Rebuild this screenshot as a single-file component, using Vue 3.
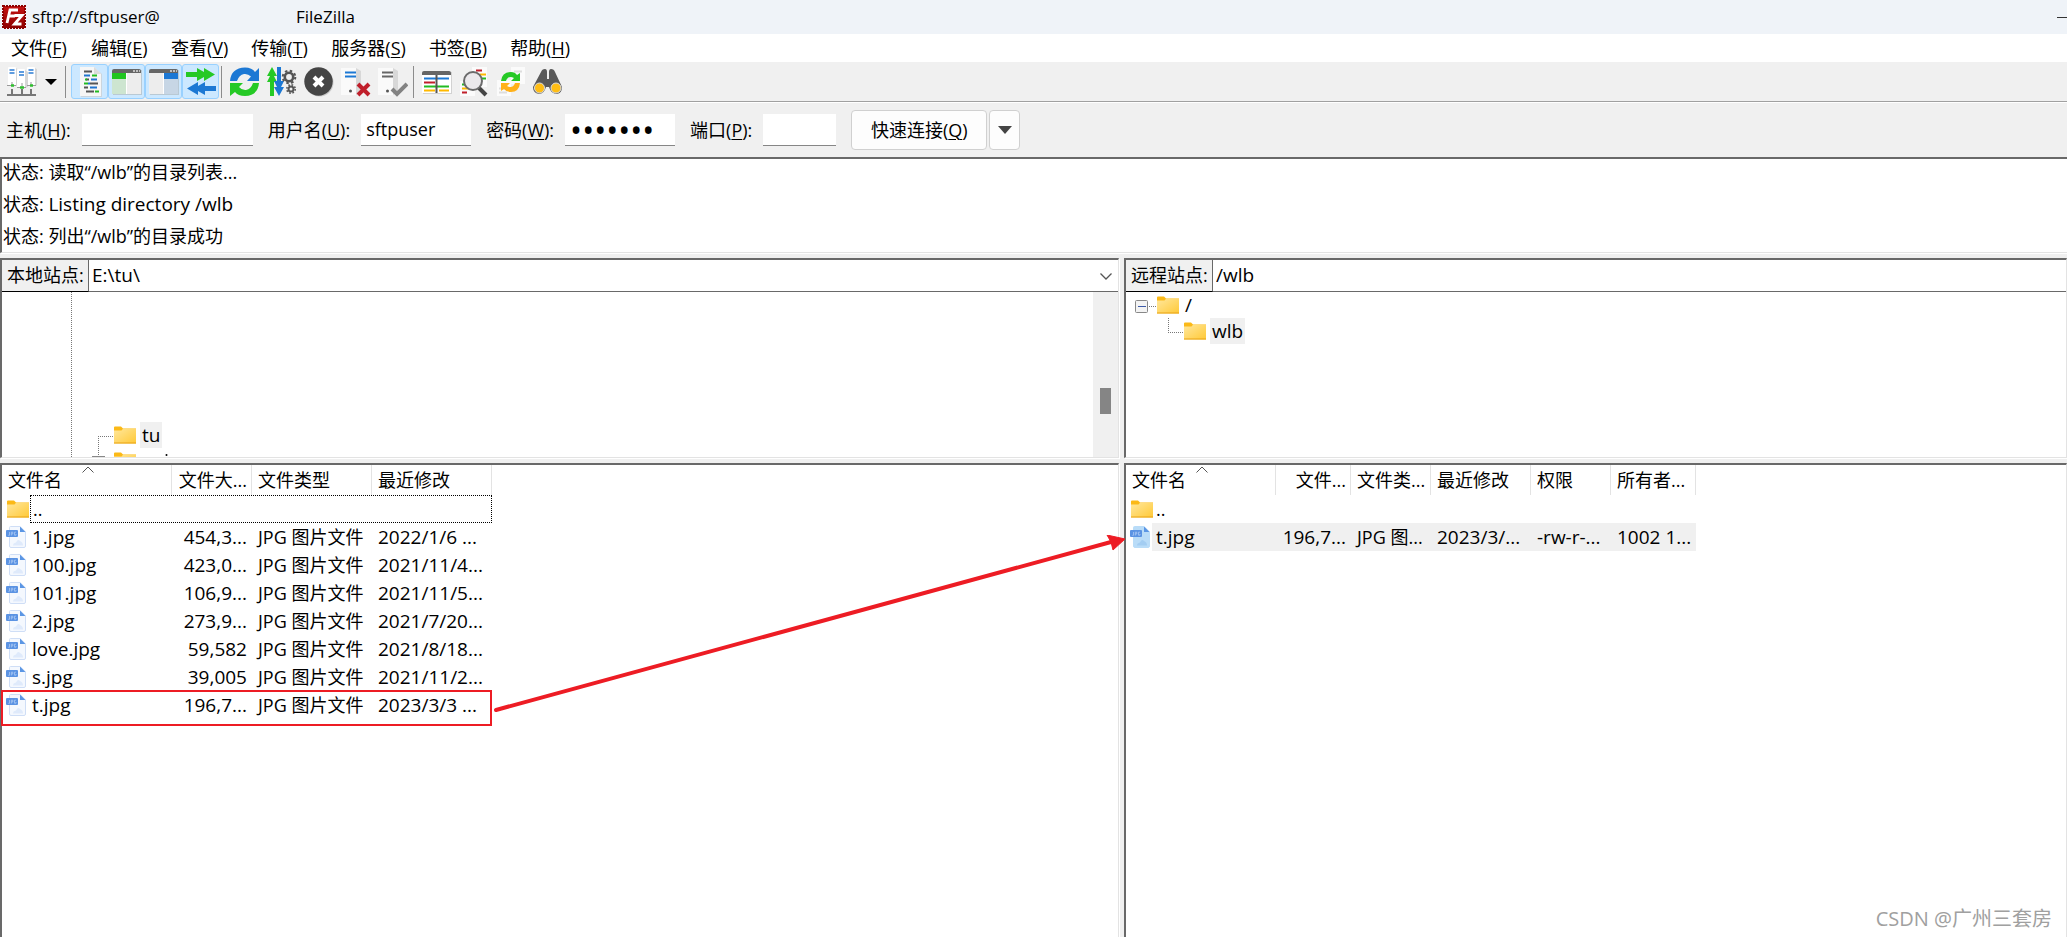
<script setup>
import { ref } from 'vue'

const menus = [
  ['文件', 'F'],
  ['编辑', 'E'],
  ['查看', 'V'],
  ['传输', 'T'],
  ['服务器', 'S'],
  ['书签', 'B'],
  ['帮助', 'H'],
]

const host = ref('')
const user = ref('sftpuser')
const password = ref('1234567')
const port = ref('')

const logs = [
  { text: '读取“/wlb”的目录列表...' },
  { text: 'Listing directory /wlb', latin: true },
  { text: '列出“/wlb”的目录成功' },
]

const localFiles = [
  { name: '1.jpg', size: '454,3...', type: 'JPG 图片文件', date: '2022/1/6 ...' },
  { name: '100.jpg', size: '423,0...', type: 'JPG 图片文件', date: '2021/11/4...' },
  { name: '101.jpg', size: '106,9...', type: 'JPG 图片文件', date: '2021/11/5...' },
  { name: '2.jpg', size: '273,9...', type: 'JPG 图片文件', date: '2021/7/20...' },
  { name: 'love.jpg', size: '59,582', type: 'JPG 图片文件', date: '2021/8/18...' },
  { name: 's.jpg', size: '39,005', type: 'JPG 图片文件', date: '2021/11/2...' },
  { name: 't.jpg', size: '196,7...', type: 'JPG 图片文件', date: '2023/3/3 ...' },
]
</script>

<template>
  <div class="app">
    <svg class="defs" aria-hidden="true">
      <defs>
        <linearGradient id="folderFill" x1="0" y1="0" x2="1" y2="1">
          <stop offset="0" stop-color="#ffe79c" />
          <stop offset="1" stop-color="#ffc937" />
        </linearGradient>
        <linearGradient id="logoFill" x1="0" y1="0" x2="0" y2="1">
          <stop offset="0" stop-color="#c41212" />
          <stop offset="1" stop-color="#8e0000" />
        </linearGradient>
        <symbol id="folder" viewBox="0 0 22 18">
          <path d="M0 1.500Q0 .500 1 .500H7L9 2.500H22V7H0Z" fill="#fbb917" />
          <path d="M0 4.500H7.500L9 2.700H22V17.500H0Z" fill="url(#folderFill)" />
          <path d="M0 17H22" stroke="#e8a317" />
        </symbol>
        <symbol id="jpg" viewBox="0 0 20 22">
          <path d="M4.500.500H14L19.500 6V20Q19.500 21.500 18 21.500H5Q3.500 21.500 3.500 20V1.500Q3.500.500 4.500.500Z" class="sheet" />
          <path d="M14 .500V6H19.500Z" fill="#5b96e4" />
          <path d="M7 19.500Q7 17 10 16.500Q12 12.500 14 15Q17 16 17 19.500Z" class="hill" />
          <rect x="0" y="4" width="12" height="7" rx="1" fill="#5b93e3" />
          <path d="M3.500 6V9.300H2.300M5.300 9.500V6.200H6.800V8H5.300M10 6.200H8.500V9.200H10V8" fill="none" stroke="#b3cff5" stroke-width=".7" />
        </symbol>
        <symbol id="server" viewBox="0 0 11 20">
          <rect width="8" height="19" rx="1" fill="#fff" />
          <path d="M8 1L11 3V18L8 19Z" fill="#d6d6d6" />
        </symbol>
      </defs>
    </svg>

    <header class="title-bar">
      <svg class="logo" viewBox="0 0 24 24">
        <rect x="1" y="1" width="22" height="22" fill="url(#logoFill)" stroke="#8c0000" stroke-width="2" stroke-dasharray="2 1" />
        <path d="M5 18L8 5H16M7 11H13M12.500 10.500H20L12.500 19H19.500" fill="none" stroke="#fff" stroke-width="2.800" />
      </svg>
      <span class="session">sftp://sftpuser@</span>
      <span>FileZilla</span>
      <button class="minimize" aria-label="最小化"></button>
    </header>

    <nav class="menu-bar">
      <button v-for="m in menus" :key="m[1]">{{ m[0] }}(<u>{{ m[1] }}</u>)</button>
    </nav>

    <div class="tool-bar">
      <button class="tool" aria-label="站点管理器">
        <svg viewBox="0 0 30 30">
          <use href="#server" x="1" y="0" width="11" height="20" />
          <use href="#server" x="20" y="0" width="11" height="20" />
          <use href="#server" x="10" y="2" width="11" height="20" />
          <path d="M2.500 3H7.500M2.500 6H7.500M21.500 3H26.500M21.500 6H26.500M12 5H17M12 8H17" stroke="#2b7cd3" stroke-width="1.300" />
          <path d="M0 18.500H9M20 18.500H29M10 20.500H19M5 15V19M24 15V19M15 16V21" stroke="#999" fill="none" />
          <path d="M4 18.500H7M23 18.500H26M13 20.500H17" stroke="#2fbf2f" stroke-width="2.500" />
          <path d="M0 28H29M5 22V28M15 22V28M24 22V28" stroke="#777" stroke-width="2" />
        </svg>
      </button>
      <button class="tool caret" aria-label="站点列表">
        <svg viewBox="0 0 12 6"><path d="M0 0H12L6 6Z" /></svg>
      </button>
      <i class="rule"></i>
      <button class="tool on" aria-label="消息日志">
        <svg viewBox="0 0 30 30">
          <path d="M6 1H20L27 7V30H6Z" fill="#cbd5dd" />
          <path d="M5 0H19L26 7V29H5Z" fill="#f6f6f6" />
          <path d="M19 0V7H26Z" fill="#dcdcdc" />
          <g stroke-width="2" transform="translate(2 0)">
            <path d="M7 4.500H15M9 12.500H12M13 16.500H21M7 20.500H11M9 24.500H17" stroke="#555" />
            <path d="M7 8.500H13M14 12.500H20M11 16.500H13M13 20.500H20" stroke="#1f75cf" />
            <path d="M15 8.500H20M7 16.500H11M18 24.500H22M8 12.500H10" stroke="#22bb22" />
          </g>
        </svg>
      </button>
      <button class="tool on" aria-label="本地目录树">
        <svg viewBox="0 0 30 30">
          <path d="M1 3H30V28H1Z" fill="#b9c9d4" />
          <path d="M0 6H29V27H0Z" fill="#ededed" />
          <path d="M0 6H14V12H0Z" fill="#20c520" />
          <path d="M0 12H14V27H0Z" fill="#cde5d0" />
          <path d="M0 6V4Q0 2 2 2H27Q29 2 29 4V6Z" fill="#666" />
          <path d="M21 4H23M24 4H26M27 4H28" stroke="#ddd" stroke-width="1.500" />
          <path d="M14.500 6V27" stroke="#fff" />
        </svg>
      </button>
      <button class="tool on" aria-label="远程目录树">
        <svg viewBox="0 0 30 30">
          <path d="M1 3H30V28H1Z" fill="#b9c9d4" />
          <path d="M0 6H29V27H0Z" fill="#ededed" />
          <path d="M15 6H29V12H15Z" fill="#1c78d4" />
          <path d="M15 12H29V27H15Z" fill="#c7d6e5" />
          <path d="M0 6V4Q0 2 2 2H27Q29 2 29 4V6Z" fill="#666" />
          <path d="M21 4H23M24 4H26M27 4H28" stroke="#ddd" stroke-width="1.500" />
          <path d="M14.500 6V27" stroke="#fff" />
        </svg>
      </button>
      <button class="tool on" aria-label="传输队列">
        <svg viewBox="0 0 30 30">
          <path d="M0 5H11V1L18 5V1L29 7.500L18 14V10L11 14V10H0Z" fill="#25c925" />
          <path d="M30 19H19V15L12 19V15L1 21.500L12 28V24L19 28V24H30Z" fill="#1c78d4" />
        </svg>
      </button>
      <i class="rule tight"></i>
      <button class="tool" aria-label="刷新">
        <svg viewBox="0 0 30 30">
          <path d="M0 14Q1 1 15 .500Q22 .500 25 5L29 1V14H17L21 9.500Q18 6.500 14 7Q9 8 7 14Z" fill="#1c78d4" />
          <path d="M29 16Q28 28.500 15 29Q8 29 5 25L0 29V16H13L9 20Q12 23.500 16 23Q21 22 23 16Z" fill="#25c925" />
        </svg>
      </button>
      <button class="tool" aria-label="处理队列">
        <svg viewBox="0 0 30 30">
          <path d="M3 29V15H0L3 9H0L5 0L10 9H7L10 15H7V29Z" fill="#25c925" />
          <path d="M10 0H14V14H17L14 20H17L12 29L7 20H10L7 14H10Z" fill="#1c78d4" />
          <g fill="none" stroke="#555">
            <circle cx="22" cy="10" r="4.200" stroke-width="2.600" />
            <circle cx="22" cy="10" r="6.300" stroke-width="2" stroke-dasharray="2.500 2.450" />
            <circle cx="24" cy="22" r="2.500" stroke-width="2" />
            <circle cx="24" cy="22" r="4.200" stroke-width="1.600" stroke-dasharray="1.700 1.600" />
          </g>
        </svg>
      </button>
      <button class="tool" aria-label="取消">
        <svg viewBox="0 0 30 30">
          <circle cx="15.500" cy="15.500" r="14" fill="#c9c9c9" />
          <circle cx="14.500" cy="14.500" r="14.200" fill="#454545" />
          <path d="M10 10L19 19M19 10L10 19" stroke="#fff" stroke-width="4" />
        </svg>
      </button>
      <button class="tool" aria-label="断开">
        <svg viewBox="0 0 30 30">
          <path d="M0 1H15V28H0Z" fill="#fafafa" /><path d="M15 1L20 4V25L15 28Z" fill="#d8d8d8" />
          <path d="M4 5.500H15M4 9.500H15" stroke="#1c78d4" stroke-width="2" />
          <circle cx="9.500" cy="24" r="1.500" fill="#555" />
          <path d="M17 17L28 28M28 17L17 28" stroke="#c01f2b" stroke-width="4" />
        </svg>
      </button>
      <button class="tool" aria-label="重新连接">
        <svg viewBox="0 0 30 30">
          <path d="M0 1H15V28H0Z" fill="#fafafa" /><path d="M15 1L20 4V25L15 28Z" fill="#d8d8d8" />
          <path d="M4 5.500H15M4 9.500H15" stroke="#666" stroke-width="2" />
          <circle cx="9.500" cy="24" r="1.500" fill="#555" />
          <path d="M14 22L19 27L29 17" fill="none" stroke="#828282" stroke-width="4" />
        </svg>
      </button>
      <i class="rule tight"></i>
      <button class="tool" aria-label="筛选">
        <svg viewBox="0 0 30 30">
          <path d="M1 5H30V27H1Z" fill="#d2d2d2" />
          <path d="M0 7H29V26H0Z" fill="#fff" />
          <path d="M0 8V6Q0 4 2 4H27Q29 4 29 6V8Z" fill="#666" />
          <path d="M2 11.500H27" stroke="#1c78d4" stroke-width="2" />
          <path d="M2 15.500H13" stroke="#c01f2b" stroke-width="2" />
          <path d="M2 19.500H27" stroke="#22bb22" stroke-width="2" />
          <path d="M2 23.500H13M17 23.500H27" stroke="#ffb900" stroke-width="2" />
          <path d="M14.500 8V26" stroke="#555" stroke-width="2" />
        </svg>
      </button>
      <button class="tool" aria-label="目录比较">
        <svg viewBox="0 0 30 30">
          <path d="M13 0H28V20H13ZM1 14H16V29H1Z" fill="#fbfbfb" />
          <path d="M17 3.500H23M3 25.500H8" stroke="#c01f2b" stroke-width="2" />
          <path d="M21 7.500H27M3 21.500H11" stroke="#ffb900" stroke-width="2" />
          <path d="M23 11.500H27M3 17.500H7" stroke="#22bb22" stroke-width="2" />
          <path d="M20 21L27 28" stroke="#444" stroke-width="4" />
          <circle cx="14" cy="14" r="9" fill="#ebe9ec" stroke="#6b6b6b" stroke-width="2" />
        </svg>
      </button>
      <button class="tool" aria-label="同步浏览">
        <svg viewBox="0 0 30 30">
          <path d="M15 0H29V17H15ZM1 13H15V29H1Z" fill="#fbfbfb" />
          <path d="M18 4.500H26M3 21.500H9M3 25.500H11" stroke="#dedede" stroke-width="2" />
          <path d="M5 14Q6 5 15 5Q19 5 21 8L24 6V14H15L18 11Q12 8 10 14Z" fill="#25c925" />
          <path d="M24 16Q23 25 15 25Q10 25 8 22L5 24V16H14L11 19Q17 22 19 16Z" fill="#ffb11a" />
        </svg>
      </button>
      <button class="tool" aria-label="查找">
        <svg viewBox="0 0 30 30">
          <path d="M8 5Q9 2 12 2Q14 2 14 5H16Q16 2 18 2Q21 2 22 5L29 20Q29 26 24 27Q18 27 16 20H13Q11 27 6 27Q0 26 0 20Z" fill="#595959" />
          <path d="M14 4H16V12H14Z" fill="#efefef" />
          <circle cx="6.500" cy="21" r="5" fill="#ffbd14" stroke="#ddd" />
          <circle cx="23" cy="21" r="5" fill="#ffbd14" stroke="#ddd" />
        </svg>
      </button>
    </div>

    <form class="quick-bar" @submit.prevent>
      <label for="host">主机(<u>H</u>):</label>
      <input id="host" v-model="host" class="host" type="text" />
      <label for="user">用户名(<u>U</u>):</label>
      <input id="user" v-model="user" class="cred" type="text" />
      <label for="pass">密码(<u>W</u>):</label>
      <input id="pass" v-model="password" class="cred secret" type="password" />
      <label for="port">端口(<u>P</u>):</label>
      <input id="port" v-model="port" class="port" type="text" />
      <button class="connect">快速连接(<u>Q</u>)</button>
      <button class="history" type="button" aria-label="历史记录">
        <svg viewBox="0 0 14 8"><path d="M0 0H14L7 8Z" fill="#444" /></svg>
      </button>
    </form>

    <section class="log sunken">
      <p v-for="l in logs" :key="l.text">状态: <span :class="{ latin: l.latin }">{{ l.text }}</span></p>
    </section>

    <main class="panes">
      <section class="pane">
        <div class="site sunken">
          <div class="address">
            <label for="localPath">本地站点:</label>
            <select id="localPath"><option>E:\tu\</option></select>
            <svg class="chevron" viewBox="0 0 12 7"><path d="M.500.500L6 6L11.500.500" fill="none" stroke="#555" stroke-width="1.300" /></svg>
          </div>
          <div class="tree">
            <svg class="branches" width="170" height="166">
              <g stroke="#777" stroke-dasharray="1 1" fill="none">
                <path d="M69.500 0V166M96.500 144V164M96 144.500H112" />
              </g>
              <path d="M90 164.500H103" stroke="#888" />
              <circle cx="164.500" cy="163" r="1" />
            </svg>
            <div class="node local-node"><svg class="folder"><use href="#folder" /></svg><span class="picked">tu</span></div>
            <div class="node local-node"><svg class="folder"><use href="#folder" /></svg></div>
            <div class="scroll"><i></i></div>
          </div>
        </div>
        <div class="files sunken">
          <table class="local">
            <colgroup><col class="w170" /><col class="w80" /><col class="w120" /><col class="w120" /></colgroup>
            <thead>
              <tr>
                <th>文件名<svg class="sort" viewBox="0 0 12 7"><path d="M.500 6.500L6 1L11.500 6.500" fill="none" stroke="#555" /></svg></th>
                <th class="num">文件大...</th><th>文件类型</th><th>最近修改</th>
              </tr>
            </thead>
            <tbody>
              <tr>
                <td colspan="4"><div class="entry"><svg class="folder"><use href="#folder" /></svg><span class="focus">..</span></div></td>
              </tr>
              <tr v-for="f in localFiles" :key="f.name">
                <td><div class="entry latin"><svg class="jpg"><use href="#jpg" /></svg><span>{{ f.name }}</span></div></td>
                <td class="num latin">{{ f.size }}</td><td>{{ f.type }}</td><td class="latin">{{ f.date }}</td>
              </tr>
            </tbody>
          </table>
          <div class="marker"></div>
          <svg class="arrow" width="640" height="190">
            <path d="M3 175L618 7" stroke="#ed1c24" stroke-width="4" stroke-linecap="round" />
            <path d="M632 4L614 0L618 7L620 15Z" fill="#ed1c24" stroke="#ed1c24" />
          </svg>
        </div>
      </section>

      <section class="pane">
        <div class="site sunken">
          <div class="address">
            <label for="remotePath">远程站点:</label>
            <select id="remotePath"><option>/wlb</option></select>
          </div>
          <div class="tree">
            <svg class="branches" width="60" height="50">
              <rect x="9.500" y="8.500" width="12" height="12" rx="1" fill="#f3f3f3" stroke="#888" />
              <path d="M12 14.500H20" stroke="#3c5aa8" />
              <g stroke="#777" stroke-dasharray="1 1"><path d="M23 14.500H31M42.500 26V40M42 40.500H58" /></g>
            </svg>
            <div class="node root-node"><svg class="folder"><use href="#folder" /></svg><span>/</span></div>
            <div class="node child-node"><svg class="folder"><use href="#folder" /></svg><span class="picked">wlb</span></div>
          </div>
        </div>
        <div class="files sunken">
          <table class="remote">
            <colgroup><col class="w150" /><col class="w75" /><col class="w80" /><col class="w100" /><col class="w80" /><col class="w85" /></colgroup>
            <thead>
              <tr>
                <th>文件名<svg class="sort" viewBox="0 0 12 7"><path d="M.500 6.500L6 1L11.500 6.500" fill="none" stroke="#555" /></svg></th>
                <th class="num">文件...</th><th>文件类...</th><th>最近修改</th><th>权限</th><th>所有者...</th>
              </tr>
            </thead>
            <tbody>
              <tr>
                <td colspan="6"><div class="entry"><svg class="folder"><use href="#folder" /></svg><span>..</span></div></td>
              </tr>
              <tr class="chosen">
                <td><div class="entry latin"><svg class="jpg"><use href="#jpg" /></svg><span>t.jpg</span></div></td>
                <td class="num latin">196,7...</td><td>JPG 图...</td><td class="latin">2023/3/...</td><td class="latin">-rw-r-...</td><td class="latin">1002 1...</td>
              </tr>
            </tbody>
          </table>
        </div>
        <div class="watermark">CSDN @广州三套房</div>
      </section>
    </main>
  </div>
</template>

<style>
body {
  margin: 0;
  overflow: hidden;
}
</style>

<style scoped>
.app {
  display: flex;
  flex-direction: column;
  height: 100vh;
  overflow: hidden;
  background: #f0f0f0;
  color: #000;
  font: 18px/28px 'Open Sans', 'Noto Sans CJK SC', sans-serif;
  white-space: nowrap;
}
.app * {
  box-sizing: border-box;
}
button,
input,
select {
  margin: 0;
  padding: 0;
  border: 0;
  border-radius: 0;
  background: none;
  color: inherit;
  font: inherit;
  outline: 0;
}
svg {
  display: block;
}
u {
  text-underline-offset: 2px;
  text-decoration-thickness: 1px;
}
.latin,
.address select,
.node {
  font-size: 19px;
}
.defs {
  position: absolute;
  width: 0;
  height: 0;
}
.title-bar {
  display: flex;
  flex: none;
  align-items: center;
  height: 34px;
  padding-left: 2px;
  background: #eff3f8;
  font-size: 17px;
}
.logo {
  width: 24px;
  height: 24px;
  margin-right: 6px;
}
.session {
  width: 264px;
}
.minimize {
  width: 10px;
  height: 1px;
  margin-left: auto;
  background: #333;
}
.menu-bar {
  display: flex;
  flex: none;
  gap: 23px;
  height: 28px;
  padding-left: 11px;
  background: #fff;
}
.menu-bar button {
  min-width: 57px;
  text-align: left;
}
.tool-bar {
  display: flex;
  flex: none;
  align-items: center;
  height: 40px;
  padding: 0 0 0 3px;
  border-bottom: 1px solid #a0a0a0;
  box-shadow: 0 1px #fff;
}
.tool {
  display: flex;
  align-items: center;
  justify-content: center;
  width: 37px;
  height: 35px;
}
.tool svg {
  width: 30px;
  height: 30px;
}
.tool.on {
  border: 1px solid #99d1ff;
  border-radius: 3px;
  background: #cce8ff;
}
.tool.caret {
  width: 22px;
}
.tool.caret svg {
  width: 12px;
  height: 6px;
}
.rule {
  width: 1px;
  height: 32px;
  margin: 0 5px 0 3px;
  background: #8c8c8c;
}
.rule.tight {
  margin: 0 4px 0 2px;
}
.quick-bar {
  display: flex;
  flex: none;
  align-items: center;
  height: 55px;
  padding-left: 6px;
}
.quick-bar label {
  margin-right: 11px;
}
.quick-bar input {
  height: 32px;
  margin-right: 15px;
  padding: 0 5px;
  border-bottom: 1px solid #868686;
  background: #fff;
}
.quick-bar .host {
  width: 171px;
}
.quick-bar .cred {
  width: 110px;
}
.quick-bar .secret {
  font-size: 32px;
}
.quick-bar .port {
  width: 73px;
}
.quick-bar button {
  height: 40px;
  border: 1px solid #d0d0d0;
  border-radius: 4px;
  background: #fdfdfd;
}
.connect {
  width: 136px;
}
.quick-bar .history {
  display: grid;
  place-items: center;
  width: 31px;
  margin-left: 2px;
}
.history svg {
  width: 14px;
  height: 8px;
}
.sunken {
  border-top: 2px solid #696969;
  border-left: 2px solid #696969;
  border-right: 1px solid #e3e3e3;
  border-bottom: 1px solid #e3e3e3;
  background: #fff;
  box-shadow: 1px 1px #fff;
}
.log {
  flex: none;
  height: 96px;
  border-right: 0;
}
.log p {
  height: 32px;
  margin: 0;
  padding-left: 1px;
  line-height: 26px;
}
.panes {
  display: grid;
  flex: 1;
  grid-template-columns: 1119fr 943fr;
  gap: 5px;
  min-height: 0;
  padding-top: 5px;
}
.pane {
  position: relative;
  display: flex;
  flex-direction: column;
  gap: 5px;
  min-width: 0;
}
.site {
  flex: none;
  height: 200px;
}
.address {
  position: relative;
  display: flex;
  height: 32px;
  border-bottom: 1px solid #696969;
}
.address label {
  width: 87px;
  height: 32px;
  padding-left: 5px;
  border-right: 1px solid #696969;
  border-bottom: 1px solid #000;
  background: #f0f0f0;
  line-height: 30px;
}
.address select {
  flex: 1;
  padding: 0 0 2px 3px;
  appearance: none;
}
.chevron {
  position: absolute;
  top: 13px;
  right: 6px;
  width: 12px;
  height: 7px;
}
.tree {
  position: relative;
  height: 165px;
  overflow: hidden;
  line-height: 26px;
}
.branches {
  position: absolute;
  top: 0;
  left: 0;
}
.node {
  display: flex;
  align-items: center;
  gap: 4px;
  height: 26px;
}
.node span {
  padding: 0 2px;
}
.picked {
  background: #f0f0f0;
}
.folder {
  flex: none;
  width: 22px;
  height: 18px;
}
.jpg {
  --sheet: #f4f8fe;
  --edge: #cfdef6;
  --hill: #dfeafb;
  flex: none;
  width: 20px;
  height: 22px;
}
.local-node {
  margin-left: 112px;
}
.tree > .local-node:nth-child(2) {
  margin-top: 130px;
}
.root-node {
  margin-left: 31px;
}
.child-node {
  margin-left: 58px;
}
.scroll {
  position: absolute;
  top: 0;
  right: 0;
  bottom: 0;
  width: 25px;
  background: #f0f0f0;
}
.scroll i {
  display: block;
  width: 11px;
  height: 26px;
  margin: 96px 7px 0;
  background: #858585;
}
.files {
  position: relative;
  flex: 1;
  border-bottom: 0;
}
table {
  border-collapse: separate;
  border-spacing: 0;
  table-layout: fixed;
}
.local {
  width: 490px;
}
.remote {
  width: 570px;
}
.w170 {
  width: 170px;
}
.w150 {
  width: 150px;
}
.w120 {
  width: 120px;
}
.w100 {
  width: 100px;
}
.w85 {
  width: 85px;
}
.w80 {
  width: 80px;
}
.w75 {
  width: 75px;
}
th {
  position: relative;
  height: 30px;
  padding: 0 4px 0 6px;
  border-right: 1px solid #e3e3e3;
  font-weight: 400;
  text-align: left;
}
.sort {
  position: absolute;
  top: 1px;
  left: 50%;
  width: 12px;
  height: 7px;
  margin-left: -5px;
}
td {
  height: 28px;
  padding: 0 5px 0 6px;
}
td:first-child {
  padding: 0 0 0 4px;
}
.num {
  text-align: right;
}
.entry {
  display: flex;
  align-items: center;
  height: 28px;
}
.entry .folder {
  margin: 0 1px;
}
.entry .jpg {
  margin-right: 4px;
}
.entry span {
  flex: 1;
  padding-left: 2px;
}
.entry .focus {
  border: 1px dotted #000;
  line-height: 26px;
}
.sheet {
  fill: var(--sheet);
  stroke: var(--edge);
}
.hill {
  fill: var(--hill);
}
.chosen td {
  background: #f0f0f0;
}
.chosen td:first-child {
  background: linear-gradient(to right, #fff 26px, #f0f0f0 26px);
}
.chosen .jpg {
  --sheet: #b9dcf8;
  --edge: #b9dcf8;
  --hill: #a3cdf2;
}
.marker {
  position: absolute;
  top: 225px;
  left: -1px;
  width: 491px;
  height: 36px;
  border: 2px solid #ed1c24;
}
.arrow {
  position: absolute;
  z-index: 2;
  top: 70px;
  left: 491px;
  pointer-events: none;
}
.watermark {
  position: absolute;
  right: 15px;
  bottom: 4px;
  color: #a0a0a0;
  font-size: 20px;
}
</style>
